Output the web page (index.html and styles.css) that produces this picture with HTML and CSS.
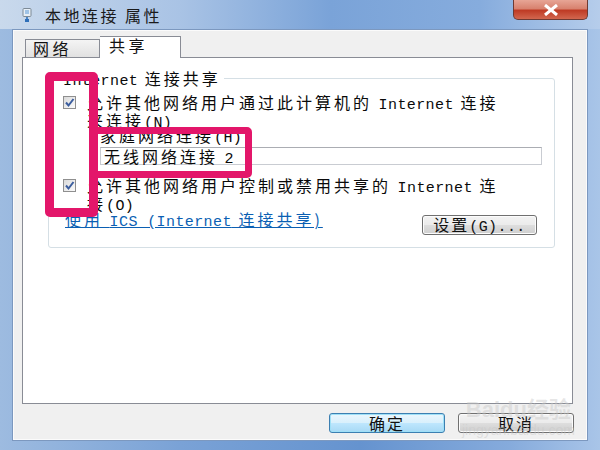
FILE: index.html
```html
<!DOCTYPE html>
<html lang="zh-CN">
<head>
    <meta charset="UTF-8">
    <title>本地连接 属性</title>
    <link rel="stylesheet" href="styles.css">
</head>
<body>
<div class="window">
    <div class="titlebar">
        <svg class="ticon" width="10" height="15" viewBox="0 0 10 15">
            <rect x="1" y="0.5" width="8" height="8" rx="1" fill="#e6eef6" stroke="#7d8a96"/>
            <rect x="3" y="2" width="4" height="4" fill="#9fc3e6"/>
            <rect x="4" y="9" width="2" height="2" fill="#4a86c8"/>
            <rect x="3" y="11" width="4" height="3" fill="#2f6fb8"/>
        </svg>
        <span class="title">本地连接 属性</span>
        <div class="close">
            <svg width="20" height="12" viewBox="0 0 20 12">
                <path d="M4 1 L16 11 M16 1 L4 11" stroke="#fff" stroke-width="3"/>
            </svg>
        </div>
    </div>

    <div class="client">
        <div class="tabs">
            <div class="tab">网络</div>
            <div class="tab active">共享</div>
        </div>
        <div class="panel">
            <div class="group">
                <div class="legend"><span class="en">Internet</span> 连接共享</div>

                <div class="check-row first">
                    <span class="cb">
                        <svg width="13" height="13" viewBox="0 0 13 13">
                            <path d="M3 6.5 L5.5 9.5 L10.5 3" fill="none" stroke="#3b5d9e" stroke-width="2"/>
                        </svg>
                    </span>
                    <span class="lbl">允许其他网络用户通过此计算机的 <span class="en">Internet</span> 连接<br>来连接<span class="en">(N)</span></span>
                </div>

                <div class="field-label">家庭网络连接<span class="en">(H):</span></div>
                <div class="field">无线网络连接 <span class="en">2</span></div>

                <div class="check-row second">
                    <span class="cb">
                        <svg width="13" height="13" viewBox="0 0 13 13">
                            <path d="M3 6.5 L5.5 9.5 L10.5 3" fill="none" stroke="#3b5d9e" stroke-width="2"/>
                        </svg>
                    </span>
                    <span class="lbl">允许其他网络用户控制或禁用共享的 <span class="en">Internet</span> 连<br>接<span class="en">(O)</span></span>
                </div>

                <div class="bottom-row">
                    <a class="link" href="#">使用 <span class="en">ICS (Internet</span> 连接共享)</a>
                    <button class="btn settings">设置<span class="en">(G)...</span></button>
                </div>
            </div>
        </div>
        <div class="actions">
            <button class="btn default">确定</button>
            <button class="btn">取消</button>
        </div>
    </div>

    <!-- annotation boxes drawn over the dialog -->
    <div class="mark mark-checks"></div>
    <div class="mark mark-field"></div>

    <div class="watermark">
        <span class="wm-big">Baidu经验</span>
        <span class="wm-small">jingyan.baidu.com</span>
    </div>
</div>
</body>
</html>
```

FILE: styles.css
```css
body {
    margin: 0;
    padding: 0;
    width: 600px;
    height: 450px;
    overflow: hidden;
    font-family: "Noto Sans CJK SC", sans-serif;
}
.window {
    position: relative;
    box-sizing: border-box;
    height: 450px;
    display: flex;
    flex-direction: column;
    padding: 0 12px 9px 12px;
    background: linear-gradient(90deg, #9dbbe0 0%, #7aa2d6 30%, #6593cf 60%, #86abdc 85%, #a9c5e8 100%);
}
.titlebar {
    height: 29px;
    margin: 0 -12px;
    padding: 0 12px 0 22px;
    display: flex;
    align-items: center;
    background: linear-gradient(90deg, #c9d9ec 0%, #a9c3e5 30%, #7aa3d8 55%, #86acdd 80%, #b6cdeb 100%);
}
.ticon {
    margin-top: 1px;
}
.title {
    margin-left: 13px;
    font-size: 16px;
    letter-spacing: 2.5px;
    color: #1a1a1a;
}
.close {
    margin-left: auto;
    align-self: flex-start;
    width: 75px;
    height: 20px;
    box-sizing: border-box;
    border: 1px solid #6e3a33;
    border-top: none;
    border-radius: 0 0 5px 5px;
    background: linear-gradient(180deg, #e7a596 0%, #d8826f 45%, #bf3b25 55%, #d2674f 100%);
    display: flex;
    align-items: center;
    justify-content: center;
}
.client {
    flex-grow: 1;
    display: flex;
    flex-direction: column;
    background-color: #f0f0f0;
    border: 1px solid #7c98bf;
    box-shadow: inset 0 0 0 1px #fbfbfb;
    padding: 6px 14px 7px 9px;
}
.tabs {
    display: flex;
    align-items: flex-end;
    padding-left: 3px;
    height: 21px;
}
.tab {
    box-sizing: border-box;
    height: 18px;
    width: 75px;
    padding-left: 7px;
    border: 1px solid #898c95;
    border-bottom: none;
    background: linear-gradient(180deg, #f4f4f4, #e1e1e1);
    font-size: 16px;
    line-height: 17px;
    letter-spacing: 3.5px;
    color: #111;
}
.tab.active {
    height: 22px;
    width: 81px;
    padding-left: 9px;
    margin-bottom: -1px;
    background: #fff;
    border-left: none;
    position: relative;
    z-index: 1;
}
.panel {
    flex-grow: 1;
    background: #fff;
    border: 1px solid #898c95;
    padding: 20px 17px 0 25px;
}
.group {
    box-sizing: border-box;
    height: 170px;
    border: 1px solid #d5dfe5;
    border-radius: 3px;
    padding: 0 12px 0 14px;
    font-size: 16px;
    line-height: 14px;
    letter-spacing: 3px;
    color: #0a0a0a;
}
.legend {
    width: fit-content;
    margin: -9px 0 0 -3px;
    padding: 0 3px;
    height: 16px;
    line-height: 16px;
    background: #fff;
}
.en {
    font-family: "Liberation Mono", monospace;
    font-size: 15px;
    letter-spacing: 0.4px;
}
.check-row {
    display: flex;
    align-items: flex-start;
    height: 30px;
}
.check-row.first {
    margin-top: 9px;
}
.check-row.second {
    margin-top: 13px;
}
.cb {
    flex-shrink: 0;
    width: 13px;
    height: 13px;
    box-sizing: border-box;
    border: 1px solid #8f8f8f;
    background: linear-gradient(135deg, #dadada, #fbfbfb);
    margin-top: 1px;
    margin-right: 11px;
    display: flex;
    align-items: center;
    justify-content: center;
}
.cb svg {
    flex-shrink: 0;
}
.lbl {
    height: 30px;
}
.field-label {
    margin: 3px 0 0 37px;
    height: 15px;
    line-height: 15px;
}
.field {
    margin: 4px 0 0 37px;
    height: 18px;
    box-sizing: border-box;
    border: 1px solid #c9ccd2;
    border-top-color: #abadb3;
    padding-left: 3px;
    line-height: 16px;
}
.bottom-row {
    display: flex;
    align-items: center;
    justify-content: space-between;
    margin-top: 7px;
    height: 20px;
}
.link {
    margin-left: 2px;
    margin-bottom: 8px;
    color: #0b5fb3;
    text-decoration: underline;
    line-height: 15px;
}
.btn {
    box-sizing: border-box;
    height: 20px;
    border: 1px solid #707070;
    border-radius: 3px;
    background: linear-gradient(180deg, #f3f3f3 0%, #ebebeb 48%, #dddddd 52%, #cfcfcf 100%);
    box-shadow: inset 0 0 0 1px #fcfcfc;
    font-family: "Noto Sans CJK SC", sans-serif;
    font-size: 16px;
    letter-spacing: 2px;
    line-height: 16px;
    color: #111;
    padding: 0;
}
.btn.settings {
    width: 115px;
    margin-right: 5px;
}
.actions {
    display: flex;
    justify-content: flex-end;
    gap: 13px;
    padding-top: 9px;
    margin-right: -1px;
}
.actions .btn {
    width: 116px;
    height: 20px;
}
.btn.default {
    border-color: #3c7fb1;
    box-shadow: inset 0 0 0 1px #9fe0f7;
    background: linear-gradient(180deg, #eaf6fd 0%, #d9f0fc 48%, #bee6fd 52%, #a7d9f5 100%);
}
.mark {
    position: absolute;
    box-sizing: border-box;
    border: 9px solid #e3166a;
    border-radius: 5px;
}
.mark-checks {
    left: 45px;
    top: 72px;
    width: 53px;
    height: 145px;
}
.mark-field {
    left: 90px;
    top: 127px;
    width: 162px;
    height: 51px;
    border-width: 7px;
}
.watermark {
    position: absolute;
    left: 462px;
    top: 398px;
    display: flex;
    flex-direction: column;
    align-items: center;
    color: rgba(200, 200, 200, 0.45);
    font-family: "Liberation Sans", "Noto Sans CJK SC", sans-serif;
    pointer-events: none;
}
.wm-big {
    font-size: 22px;
    line-height: 24px;
    font-weight: bold;
}
.wm-small {
    font-size: 14px;
    line-height: 16px;
}
```
